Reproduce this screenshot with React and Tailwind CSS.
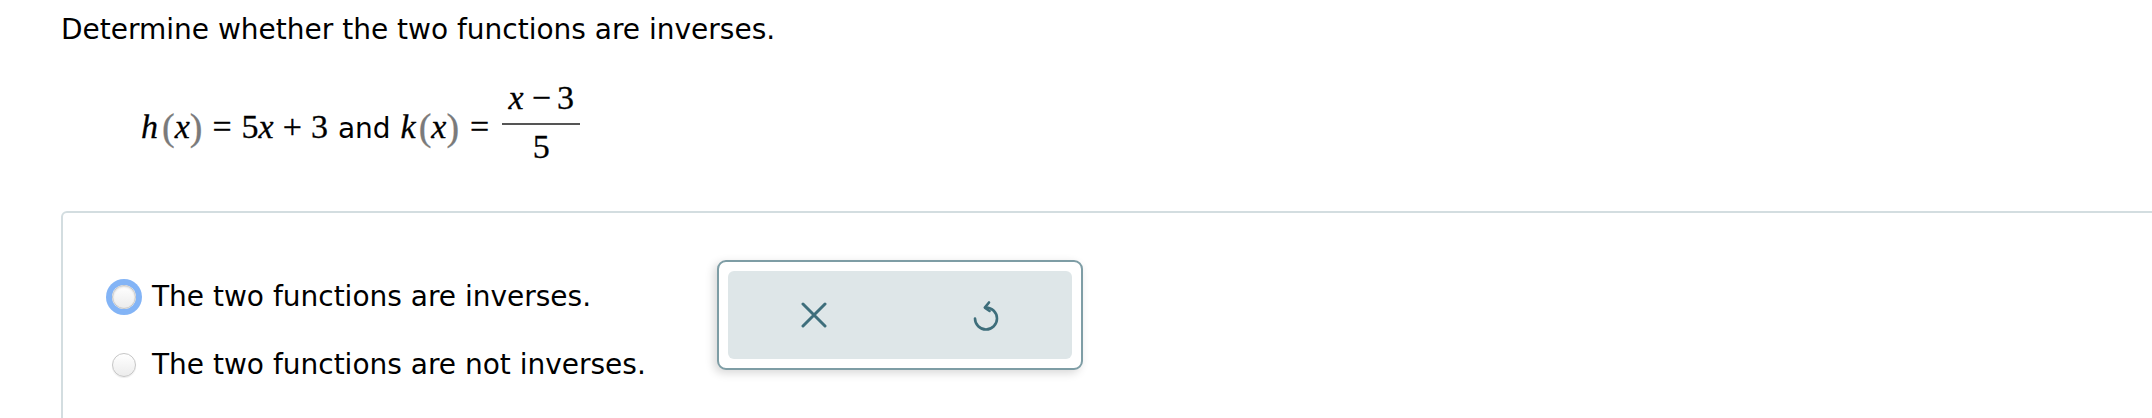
import React from "react";

const SANS = "[font-family:DejaVu_Sans,Verdana,sans-serif]";
const SERIF = "[font-family:Liberation_Serif,Times_New_Roman,serif]";

function Paren({ children, className = "" }) {
  return <span className={`inline-block text-[38px] leading-[33px] text-[#7a7a7a] align-[-2px] ${className}`}>{children}</span>;
}

function Radio({ focused }) {
  return (
    <span
      className={`w-[24px] h-[24px] rounded-full border border-[#c6c6c6] bg-gradient-to-b from-white to-[#ececec] shrink-0 ${
        focused ? "ring-[6px] ring-[#83b4f6] shadow-[inset_0_1px_2px_rgba(0,0,0,0.15)]" : "shadow-[0_1px_1px_rgba(0,0,0,0.08)]"
      }`}
    />
  );
}

function UndoIcon() {
  return (
    <svg width="30" height="34" viewBox="0 0 30 34" fill="none" stroke="#3e6e7b" strokeWidth="2.6" strokeLinecap="round" strokeLinejoin="round">
      <path d="M4 20.5 A11 11 0 1 0 15 9.5" />
      <path d="M18 4.5 L13.8 9.6 L18.6 13" />
    </svg>
  );
}

function XIcon() {
  return (
    <svg width="26" height="26" viewBox="0 0 26 26" fill="none" stroke="#3e6e7b" strokeWidth="3" strokeLinecap="round">
      <path d="M2 2 L24 24 M24 2 L2 24" />
    </svg>
  );
}

export default function App() {
  return (
    <div className="w-[2152px] h-[418px] bg-white overflow-hidden text-black">
      <p className={`${SANS} text-[28px] leading-[32px] pt-[14px] pl-[61px]`}>Determine whether the two functions are inverses.</p>

      <div className={`${SERIF} text-[34px] leading-[40px] pl-[141px] mt-[35px] whitespace-nowrap [-webkit-text-stroke:0.3px]`}>
        <i>h</i>
        <Paren className="ml-[4px]">(</Paren>
        <i>x</i>
        <Paren>)</Paren>
        <span className="ml-[10px]">=</span>
        <span className="ml-[10px]">5</span>
        <i>x</i>
        <span className="ml-[9px]">+</span>
        <span className="ml-[9px]">3</span>
        <span className={`${SANS} text-[28px] ml-[10px] [-webkit-text-stroke:0px]`}>and</span>
        <i className="ml-[10px]">k</i>
        <Paren className="ml-[3px]">(</Paren>
        <i>x</i>
        <Paren>)</Paren>
        <span className="ml-[11px]">=</span>
        <span className="inline-flex flex-col items-center align-[29px] ml-[13px] w-[78px]">
          <span className="leading-[33px] pb-[9px]">
            <i>x</i>
            <span className="ml-[8px]">−</span>
            <span className="ml-[6px]">3</span>
          </span>
          <span className="w-full h-[2px] bg-[#555]" />
          <span className="leading-[33px] pt-[5px]">5</span>
        </span>
      </div>

      <div className="mt-[48px] ml-[61px] w-[2120px] h-[300px] border-2 border-[#d3dde0] rounded-[6px] flex items-start pt-[47px] pl-[49px]">
        <div className={`${SANS} text-[28px] w-[605px] flex flex-col gap-[28px] mt-[17px]`}>
          <label className="flex items-center h-[40px]">
            <Radio focused />
            <span className="ml-[16px]">The two functions are inverses.</span>
          </label>
          <label className="flex items-center h-[40px]">
            <Radio />
            <span className="ml-[16px]">The two functions are not inverses.</span>
          </label>
        </div>
        <div className="w-[366px] h-[110px] border-2 border-[#7e9da5] rounded-[9px] bg-white p-[9px] shadow-[-3px_3px_10px_rgba(0,0,0,0.16)]">
          <div className="h-full rounded-[6px] bg-[#dee6e8] flex">
            <button className="flex-1 flex items-center justify-center">
              <XIcon />
            </button>
            <button className="flex-1 flex items-center justify-center">
              <UndoIcon />
            </button>
          </div>
        </div>
      </div>
    </div>
  );
}
